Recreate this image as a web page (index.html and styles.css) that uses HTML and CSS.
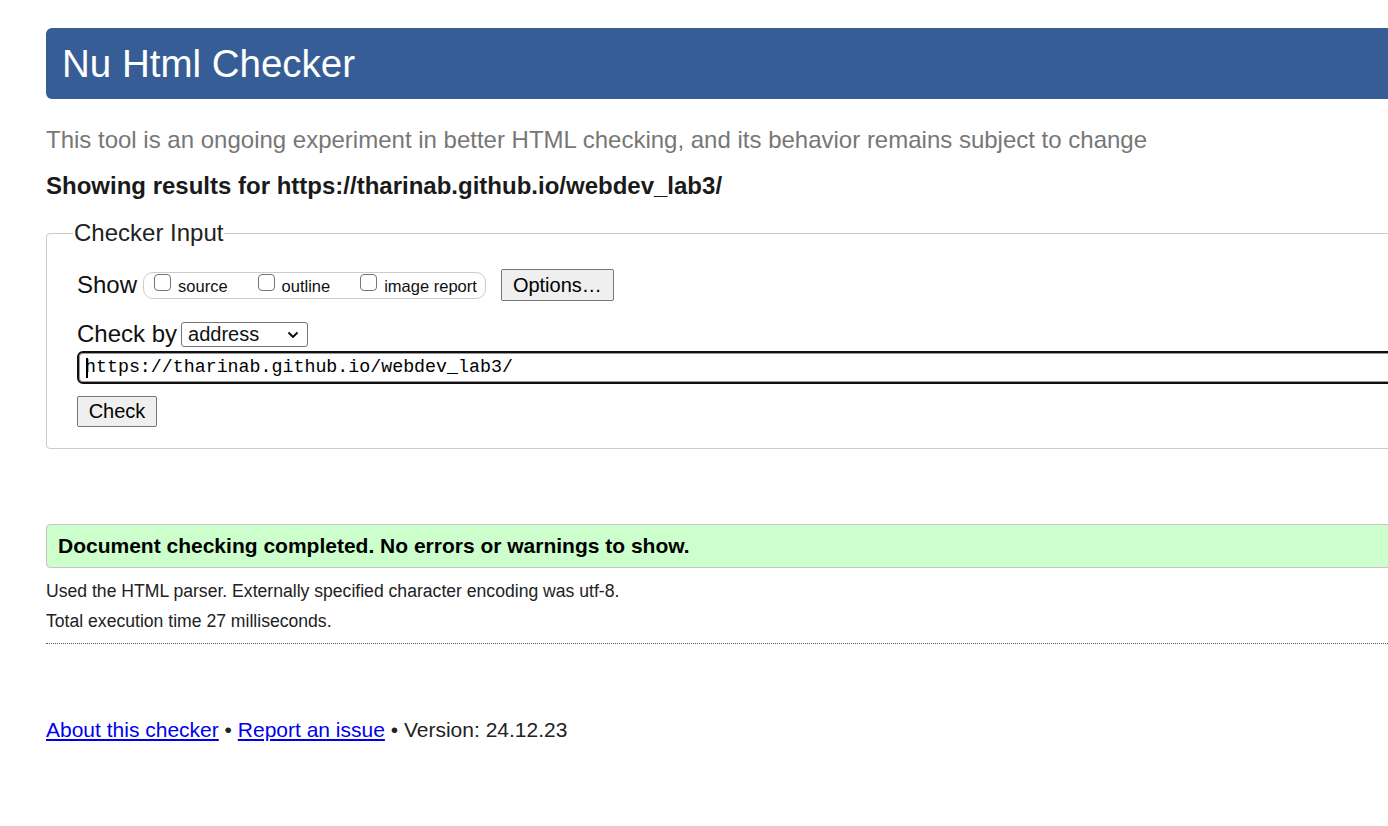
FILE: index.html
```html
<!DOCTYPE html>
<html lang="en">
<head>
<meta charset="utf-8">
<title>Showing results for https://tharinab.github.io/webdev_lab3/ - Nu Html Checker</title>
<link rel="stylesheet" href="styles.css">
</head>
<body>
<div class="page">
  <h1 class="banner">Nu Html Checker</h1>
  <p class="intro">This tool is an ongoing experiment in better HTML checking, and its behavior remains subject to change</p>
  <p class="showing">Showing results for https://tharinab.github.io/webdev_lab3/</p>
  <fieldset class="input-box">
    <legend>Checker Input</legend>
    <div class="show-row">
      <span class="show-label">Show</span>
      <span class="show-group">
        <label class="opt"><span class="cb"></span>source</label>
        <label class="opt"><span class="cb"></span>outline</label>
        <label class="opt"><span class="cb"></span>image report</label>
      </span>
      <span class="btn btn-options">Options…</span>
    </div>
    <div class="by-row">
      <span class="by-label">Check by</span>
      <span class="select">address<svg class="chev" viewBox="0 0 12 8" width="12" height="8"><path d="M1.5 1.5 L6 6 L10.5 1.5" fill="none" stroke="#000" stroke-width="1.8"/></svg></span>
    </div>
    <div class="url"><span class="caret"></span>https://tharinab.github.io/webdev_lab3/</div>
    <div class="check-row"><span class="btn btn-check">Check</span></div>
  </fieldset>
  <div class="success">Document checking completed. No errors or warnings to show.</div>
  <p class="details">Used the HTML parser. Externally specified character encoding was utf-8.</p>
  <p class="details last">Total execution time 27 milliseconds.</p>
  <p class="footer"><a href="#">About this checker</a> • <a href="#">Report an issue</a> • Version: 24.12.23</p>
</div>
</body>
</html>
```

FILE: styles.css
```css
html, body {
  margin: 0;
  padding: 0;
  overflow: hidden;
  background: #fff;
}
body {
  font-family: "Liberation Sans", Arial, sans-serif;
  color: #111;
}
.page {
  margin-left: 46px;
  width: 1400px;
  padding-top: 28px;
}
.banner {
  margin: 0;
  background: #365d95;
  color: #fff;
  font-weight: normal;
  font-size: 38.5px;
  height: 71px;
  line-height: 71px;
  padding-left: 16px;
  border-radius: 6px;
}
.intro {
  margin: 26px 0 0;
  font-size: 24px;
  line-height: 30px;
  color: #777;
}
.showing {
  margin: 16px 0 0;
  font-size: 24px;
  line-height: 30px;
  font-weight: bold;
  color: #1a1a1a;
}
.input-box {
  margin: 19px 0 0;
  padding: 23px 0 21px 30px;
  border: 1px solid #ccc;
  border-radius: 4px;
  min-width: 0;
}
.input-box legend {
  font-size: 24px;
  line-height: 26px;
  padding: 0 1px;
  margin-left: -4px;
  color: #222;
}
.show-row {
  display: flex;
  align-items: center;
  height: 32px;
}
.show-label {
  font-size: 24px;
  margin-right: 6px;
}
.show-group {
  display: flex;
  align-items: center;
  box-sizing: border-box;
  height: 27px;
  padding: 0 8px 0 10px;
  border: 1px solid #ccc;
  border-radius: 10px;
  font-size: 16.5px;
}
.opt {
  display: flex;
  align-items: center;
  margin-right: 30px;
  padding-top: 2px;
}
.opt:last-child { margin-right: 0; }
.cb {
  width: 17px;
  height: 17px;
  border: 1px solid #767676;
  border-radius: 4px;
  box-sizing: border-box;
  margin-right: 7px;
  margin-top: -7px;
  background: #fff;
}
.btn {
  display: inline-flex;
  align-items: center;
  justify-content: center;
  box-sizing: border-box;
  border: 1px solid #767676;
  border-radius: 2px;
  background: #efefef;
  color: #000;
}
.btn-options {
  margin-left: 15px;
  width: 113px;
  height: 32px;
  font-size: 20px;
}
.by-row {
  display: flex;
  align-items: center;
  margin-top: 20px;
  height: 26px;
}
.by-label {
  font-size: 24px;
  margin-right: 4px;
}
.select {
  box-sizing: border-box;
  width: 127px;
  height: 25px;
  border: 1px solid #767676;
  border-radius: 3px;
  font-size: 20px;
  display: flex;
  align-items: center;
  justify-content: space-between;
  padding: 0 8px 0 6px;
}
.chev { margin-top: 1px; }
.url {
  margin-top: 4px;
  box-sizing: border-box;
  height: 33px;
  border: 2px solid #101010;
  border-radius: 6px;
  box-shadow: inset 0 0 0 1px #999;
  font-family: "Liberation Mono", "DejaVu Sans Mono", monospace;
  font-size: 18.3px;
  line-height: 29px;
  padding-left: 6px;
  position: relative;
  color: #000;
}
.caret {
  position: absolute;
  left: 7px;
  top: 5px;
  width: 2px;
  height: 20px;
  background: #000;
}
.check-row {
  margin-top: 12px;
}
.btn-check {
  width: 80px;
  height: 31px;
  font-size: 20px;
}
.success {
  margin-top: 75px;
  background: #ccffcc;
  border: 1px solid #c6c6c6;
  border-radius: 4px;
  height: 42px;
  line-height: 42px;
  padding-left: 11px;
  font-size: 21px;
  font-weight: bold;
  color: #000;
}
.details {
  margin: 12px 0 0;
  font-size: 17.6px;
  line-height: 22px;
  color: #222;
}
.details.last {
  margin-top: 8px;
  padding-bottom: 11px;
  border-bottom: 1px dotted #555;
}
.footer {
  margin: 73px 0 0;
  font-size: 21px;
  line-height: 26px;
  color: #222;
}
.footer a {
  color: #0000ee;
  text-decoration: underline;
}
```
